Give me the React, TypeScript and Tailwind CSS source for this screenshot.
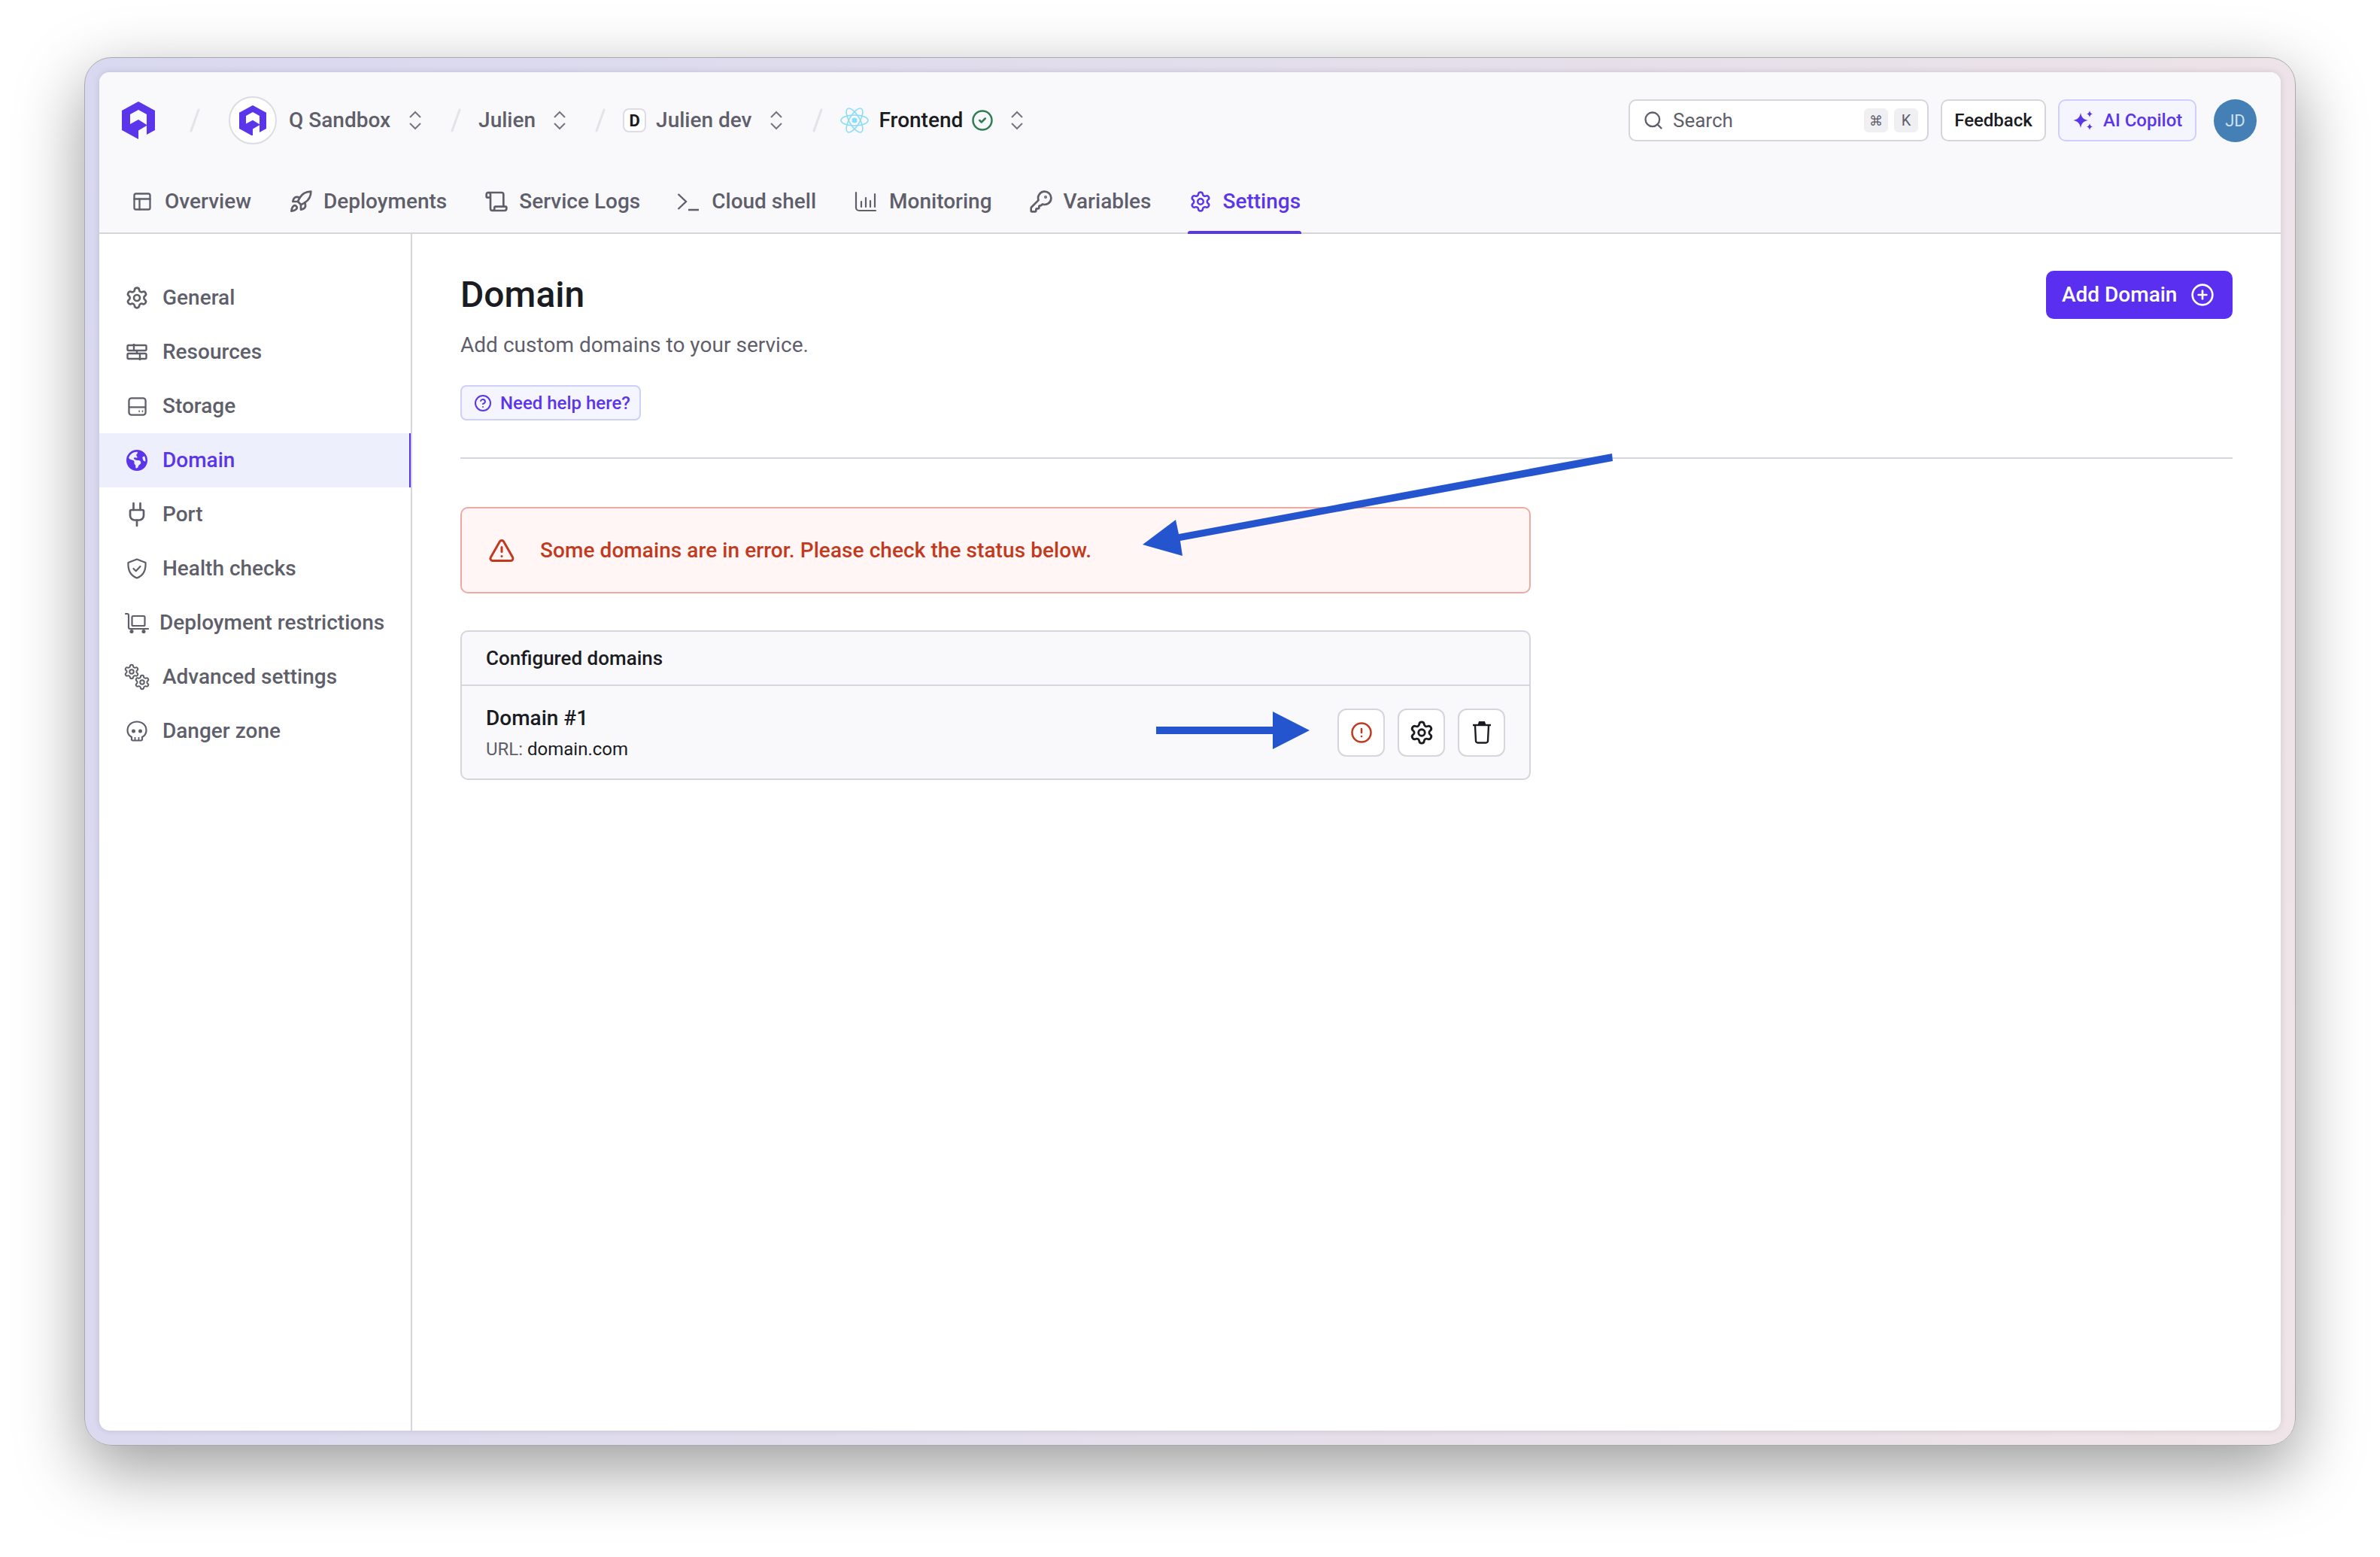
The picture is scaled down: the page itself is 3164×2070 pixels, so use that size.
import { type ReactNode } from "react";
import {
  CircleAlert,
  CircleCheck,
  CircleHelp,
  CirclePlus,
  KeyRound,
  PanelsTopLeft,
  Plug,
  Rocket,
  Scroll,
  Search,
  Settings,
  TriangleAlert,
} from "lucide-react";
import { FaEarthAmericas } from "react-icons/fa6";

function Logo({ size }: { size: number }) {
  return (
    <svg width={size} height={(size * 50) / 44} viewBox="0 0 44 50" className="shrink-0">
      <path
        fillRule="evenodd"
        fill="#5b35ea"
        d="M22 0 44 12V38L33 44V32L22 38.500V50L0 38V12ZM11 17V30L22 24 33 31V17L22 11Z"
      />
    </svg>
  );
}

function Slash() {
  return (
    <svg width="14" height="32" viewBox="0 0 14 32" className="shrink-0">
      <path d="M12 2 2 30" stroke="#e3e3e8" strokeWidth="3" strokeLinecap="round" />
    </svg>
  );
}

function Chevrons() {
  return (
    <svg width="18" height="26" viewBox="0 0 18 26" fill="none" stroke="#75757f" strokeWidth="2" className="shrink-0">
      <path d="M2 9 9 2l7 7M2 17l7 7 7-7" />
    </svg>
  );
}

function ReactLogo() {
  return (
    <svg width="38" height="34" viewBox="-19 -17 38 34" fill="none" stroke="#8adcf8" strokeWidth="1.600" className="shrink-0">
      <circle r="3.500" fill="#8adcf8" stroke="none" />
      <ellipse rx="18" ry="7" />
      <ellipse rx="18" ry="7" transform="rotate(60)" />
      <ellipse rx="18" ry="7" transform="rotate(120)" />
    </svg>
  );
}

function ShellIcon() {
  return (
    <svg width="30" height="28" viewBox="0 0 30 28" fill="none" stroke="currentColor" strokeWidth="2.400">
      <path d="M1.500 4 12 14 1.500 24M15 25h14" />
    </svg>
  );
}

function Bars() {
  return (
    <svg width="30" height="28" viewBox="0 0 30 28" fill="none" stroke="currentColor" strokeWidth="2.200" strokeLinecap="round">
      <path d="M2 2v20a4 4 0 0 0 4 4h22M9 14v7M15 9v12M21 13v8M27 4v17" />
    </svg>
  );
}

function ResourcesIcon() {
  return (
    <svg width="28" height="24" viewBox="0 0 28 24" fill="none" stroke="currentColor" strokeWidth="2.400">
      <rect x="1.500" y="3" width="25" height="7" rx="1.500" />
      <rect x="1.500" y="14" width="25" height="7" rx="1.500" />
      <path d="M10 1v9M18 14v9M14 10v4" />
    </svg>
  );
}

function StorageIcon() {
  return (
    <svg width="25" height="25" viewBox="0 0 26 26" fill="none" stroke="currentColor" strokeWidth="2.400">
      <rect x="1.500" y="1.500" width="23" height="23" rx="3.500" />
      <path d="M1.500 14h23M15 19.500h1.500M19.500 19.500H21" />
    </svg>
  );
}

function ShieldIcon() {
  return (
    <svg width="28" height="28" viewBox="0 0 28 28" fill="none" stroke="currentColor" strokeWidth="2.200" strokeLinejoin="round" strokeLinecap="round">
      <path d="M14 1.500 2.500 6c-.5 8 2 17 11.500 20.500C23.500 23 26 14 25.500 6Z" />
      <path d="m9.500 14 3.200 3.200 5.800-6.200" />
    </svg>
  );
}

function FlatbedIcon() {
  return (
    <svg width="32" height="28" viewBox="0 0 32 28" fill="none" stroke="currentColor" strokeWidth="2.200" strokeLinecap="round">
      <path d="M1 2h2a2 2 0 0 1 2 2v16a2 2 0 0 0 2 2h24" />
      <rect x="9.500" y="5" width="17" height="13" rx="1.500" />
      <circle cx="9" cy="25.500" r="1.500" fill="currentColor" />
      <circle cx="25" cy="25.500" r="1.500" fill="currentColor" />
    </svg>
  );
}

function GearsIcon() {
  return (
    <div className="flex flex-col w-[36px]">
      <Settings size={22} strokeWidth={2.2} />
      <Settings size={22} strokeWidth={2.2} className="self-end mt-[-8px]" />
    </div>
  );
}

function SkullIcon() {
  return (
    <svg width="28" height="28" viewBox="0 0 28 28" fill="none" stroke="currentColor" strokeWidth="2.200">
      <path d="M14 1.500C6.500 1.500 1.500 6.500 1.500 13c0 4 2 7 5.500 9v3A1.500 1.500 0 0 0 8.500 26.500h11A1.500 1.500 0 0 0 21 25v-3c3.500-2 5.500-5 5.500-9C26.500 6.500 21.500 1.500 14 1.500Z" />
      <circle cx="9.500" cy="14" r="2.500" fill="currentColor" stroke="none" />
      <circle cx="18.500" cy="14" r="2.500" fill="currentColor" stroke="none" />
      <path d="M11.500 22v4M16.500 22v4" strokeWidth="1.800" />
    </svg>
  );
}

function SparkleIcon() {
  return (
    <svg width="28" height="26" viewBox="0 0 28 26" fill="#5b35ea" className="shrink-0">
      <path d="M10 3c1.200 6 3.500 8.800 10 10-6.500 1.200-8.800 4-10 10-1.200-6-3.500-8.800-10-10C6.500 11.800 8.800 9 10 3Z" />
      <path d="M22 0c.6 2.800 1.400 3.800 4 4.500-2.600.7-3.400 1.700-4 4.500-.6-2.800-1.400-3.800-4-4.500 2.600-.7 3.400-1.700 4-4.500ZM22 17c.6 2.800 1.400 3.800 4 4.500-2.600.7-3.400 1.700-4 4.500-.6-2.800-1.400-3.800-4-4.500 2.600-.7 3.400-1.700 4-4.500Z" />
    </svg>
  );
}

function TrashIcon() {
  return (
    <svg width="26" height="30" viewBox="0 0 26 30" fill="none" stroke="#1b1b22" strokeWidth="2.400">
      <path d="M9 4 10 1h6l1 3Z" fill="#1b1b22" />
      <path d="M1 5h24" />
      <path d="M4 6l1 20a2.500 2.500 0 0 0 2.500 2.500h11A2.500 2.500 0 0 0 21 26l1-20" />
    </svg>
  );
}

const tabs: { label: string; icon: ReactNode; offset?: string; active?: boolean }[] = [
  { label: "Overview", icon: <PanelsTopLeft size={28} strokeWidth={2} /> },
  { label: "Deployments", icon: <Rocket size={32} strokeWidth={2} className="m-[-2px]" />, offset: "ml-[1px]" },
  { label: "Service Logs", icon: <Scroll size={32} strokeWidth={2} className="m-[-2px]" />, offset: "ml-[1px]" },
  { label: "Cloud shell", icon: <ShellIcon />, offset: "ml-[-2px]" },
  { label: "Monitoring", icon: <Bars /> },
  { label: "Variables", icon: <KeyRound size={32} strokeWidth={2} className="m-[-2px]" /> },
  { label: "Settings", icon: <Settings size={30} strokeWidth={2} className="m-[-1px]" />, active: true },
];

const sideItems: { label: string; icon: ReactNode; active?: boolean; tight?: boolean }[] = [
  { label: "General", icon: <Settings size={32} strokeWidth={2} /> },
  { label: "Resources", icon: <ResourcesIcon /> },
  { label: "Storage", icon: <StorageIcon /> },
  { label: "Domain", icon: <FaEarthAmericas size={28} />, active: true },
  { label: "Port", icon: <Plug size={36} strokeWidth={1.800} /> },
  { label: "Health checks", icon: <ShieldIcon /> },
  { label: "Deployment restrictions", icon: <FlatbedIcon />, tight: true },
  { label: "Advanced settings", icon: <GearsIcon /> },
  { label: "Danger zone", icon: <SkullIcon /> },
];

function Header() {
  return (
    <header className="bg-[#f9f9fb] border-b-2 border-[#d5d5dd]">
      <div className="h-[128px] pl-[30px] pr-[32px] flex items-center">
        <Logo size={44} />
        <div className="ml-[46px]"><Slash /></div>
        <div className="ml-[38px] w-[64px] h-[64px] rounded-full border-2 border-[#dcdce2] bg-white flex items-center justify-center">
          <Logo size={36} />
        </div>
        <span className="ml-[16px] text-[28px] font-medium text-[#5f5f6b]">Q Sandbox</span>
        <div className="ml-[24px]"><Chevrons /></div>
        <div className="ml-[38px]"><Slash /></div>
        <span className="ml-[23px] text-[28px] font-medium text-[#5f5f6b]">Julien</span>
        <div className="ml-[23px]"><Chevrons /></div>
        <div className="ml-[38px]"><Slash /></div>
        <div className="ml-[23px] w-[31px] h-[32px] rounded-[8px] border-2 border-[#dcdce2] bg-white flex items-center justify-center text-[22px] font-bold text-[#1b1b22]">
          D
        </div>
        <span className="ml-[13px] text-[28px] font-medium text-[#5f5f6b]">Julien dev</span>
        <div className="ml-[23px]"><Chevrons /></div>
        <div className="ml-[39px]"><Slash /></div>
        <div className="ml-[23px]"><ReactLogo /></div>
        <span className="ml-[14px] text-[28px] font-medium text-[#1b1b22]">Frontend</span>
        <CircleCheck size={30} strokeWidth={2} className="ml-[11px] text-[#2f7d55]" />
        <div className="ml-[22px]"><Chevrons /></div>

        <div className="ml-auto flex items-center gap-[16px]">
          <div className="w-[399px] h-[56px] bg-white rounded-[10px] border-2 border-[#d5d5dd] pl-[17px] pr-[12px] flex items-center">
            <Search size={28} strokeWidth={2} className="text-[#5f5f6b]" />
            <span className="ml-[12px] text-[26px] text-[#5f5f6b]">Search</span>
            <div className="ml-auto flex gap-[8px]">
              <span className="w-[32px] h-[32px] rounded-[6px] bg-[#f0f0f3] flex items-center justify-center text-[18px] text-[#5f5f6b]">⌘</span>
              <span className="w-[32px] h-[32px] rounded-[6px] bg-[#f0f0f3] flex items-center justify-center text-[20px] text-[#5f5f6b]">K</span>
            </div>
          </div>
          <div className="w-[140px] h-[56px] bg-white rounded-[10px] border-2 border-[#d5d5dd] flex items-center justify-center">
            <span className="text-[24px] font-medium text-[#1b1b22]">Feedback</span>
          </div>
          <div className="w-[184px] h-[56px] bg-[#f5f5ff] rounded-[10px] border-2 border-[#cfcffb] pl-[18px] flex items-center gap-[12px]">
            <SparkleIcon />
            <span className="text-[24px] font-medium text-[#5b35ea]">AI Copilot</span>
          </div>
          <div className="ml-[7px] w-[57px] h-[57px] rounded-full bg-[#447fb5] flex items-center justify-center text-[22px] text-[#cfe0ef]">
            JD
          </div>
        </div>
      </div>
      <nav className="h-[85px] pt-[2px] pl-[43px] flex gap-[51px]">
        {tabs.map((t) => (
          <div
            key={t.label}
            className={`relative flex items-center gap-[16px] ${t.active ? "text-[#5b35ea]" : "text-[#5f5f6b]"} ${t.offset ?? ""}`}
          >
            {t.icon}
            <span className="text-[28px] font-medium">{t.label}</span>
            {t.active && <div className="absolute left-[-3px] right-[-1px] bottom-[-2px] h-[4px] rounded-t-[3px] bg-[#5b35ea]" />}
          </div>
        ))}
      </nav>
    </header>
  );
}

function Sidebar() {
  return (
    <aside className="w-[416px] shrink-0 border-r-2 border-[#d5d5dd] pt-[49px]">
      {sideItems.map((s) => (
        <div
          key={s.label}
          className={
            s.active
              ? "h-[72px] flex items-center bg-[#eeeffc] border-r-[2px] border-[#5b35ea] text-[#5b35ea]"
              : "h-[72px] flex items-center text-[#5f5f6b]"
          }
        >
          <div className="w-[84px] shrink-0 flex justify-center pl-[16px]">{s.icon}</div>
          <span className={s.tight ? "ml-[-4px] text-[28px] font-medium" : "text-[28px] font-medium"}>{s.label}</span>
        </div>
      ))}
    </aside>
  );
}

function Main() {
  return (
    <main className="flex-1 pl-[64px] pr-[64px] pt-[49px]">
      <div className="flex items-start justify-between">
        <div>
          <h1 className="mt-[4px] text-[48px] leading-[56px] font-medium text-[#1b1b22]">Domain</h1>
          <p className="mt-[19px] text-[28px] leading-[40px] tracking-[0.03px] text-[#5f5f6b]">Add custom domains to your service.</p>
          <div className="mt-[33px] w-[240px] h-[47px] rounded-[8px] bg-[#f5f5ff] border-2 border-[#cfcffb] pl-[16px] flex items-center gap-[11px] text-[#5b35ea]">
            <CircleHelp size={24} strokeWidth={2} />
            <span className="text-[24px] font-medium">Need help here?</span>
          </div>
        </div>
        <button className="h-[64px] w-[248px] rounded-[10px] bg-[#5b2ff0] text-white pl-[21px] flex items-center gap-[18px]">
          <span className="text-[28px] font-medium">Add Domain</span>
          <CirclePlus size={32} strokeWidth={2} />
        </button>
      </div>
      <div className="mt-[49px] h-[2px] bg-[#d5d5dd]" />
      <div className="w-[1423px]">
        <div className="mt-[64px] h-[115px] rounded-[10px] bg-[#fff6f5] border-2 border-[#eeaaa0] pl-[36px] flex items-center gap-[34px] text-[#c23a1e]">
          <TriangleAlert size={36} strokeWidth={2} className="m-[-1px]" />
          <span className="text-[28px] font-medium tracking-[0.07px]">Some domains are in error. Please check the status below.</span>
        </div>
        <div className="mt-[49px] rounded-[10px] bg-[#f9f9fb] border-2 border-[#d5d5dd]">
          <div className="h-[72px] pl-[32px] flex items-center border-b-2 border-[#d5d5dd]">
            <span className="text-[26px] font-medium text-[#1b1b22]">Configured domains</span>
          </div>
          <div className="h-[123px] pl-[32px] pr-[32px] flex items-center justify-between">
            <div className="pt-[2px] flex flex-col gap-[9px]">
              <span className="text-[28px] leading-[34px] font-medium text-[#1b1b22]">Domain #1</span>
              <span className="text-[24px] leading-[30px] text-[#5f5f6b]">URL: <span className="text-[#1b1b22]">domain.com</span></span>
            </div>
            <div className="flex gap-[17px]">
              <div className="w-[63px] h-[64px] bg-white rounded-[12px] border-2 border-[#d5d5dd] flex items-center justify-center text-[#c23a1e]">
                <CircleAlert size={30} strokeWidth={2} />
              </div>
              <div className="w-[63px] h-[64px] bg-white rounded-[12px] border-2 border-[#d5d5dd] flex items-center justify-center text-[#1b1b22]">
                <Settings size={34} strokeWidth={2} />
              </div>
              <div className="w-[63px] h-[64px] bg-white rounded-[12px] border-2 border-[#d5d5dd] flex items-center justify-center">
                <TrashIcon />
              </div>
            </div>
          </div>
        </div>
      </div>
    </main>
  );
}

export default function App() {
  return (
    <div className="relative w-[3164px] h-[2070px] bg-white overflow-hidden pt-[76px] pl-[112px] font-['Roboto',sans-serif]">
      <div className="w-[2940px] h-[1846px] p-[19px] border border-[#a9a9a9] rounded-[36px] bg-linear-[100deg,#d8d8f0,#efe4e7] shadow-[0_30px_90px_rgba(0,0,0,0.4)]">
        <div className="h-full rounded-[14px] bg-white overflow-hidden flex flex-col shadow-[0_0_10px_rgba(0,0,0,0.12)]">
          <Header />
          <div className="flex-1 flex">
            <Sidebar />
            <Main />
          </div>
        </div>
      </div>
      {/* annotation arrows drawn over the screenshot */}
      <svg width="3164" height="2070" viewBox="0 0 3164 2070" className="absolute inset-0 pointer-events-none">
        <polygon fill="#2455cf" points="2143,603 2144,613 1569,719 1572,739 1519,724 1563,691 1567,710" />
        <polygon fill="#2455cf" points="1537,966 1692,966 1692,946 1741,971 1692,996 1692,976 1537,976" />
      </svg>
    </div>
  );
}
